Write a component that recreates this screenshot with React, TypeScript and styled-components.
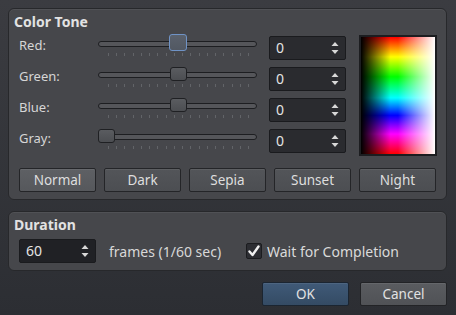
import React from "react";
import styled, { createGlobalStyle, css } from "styled-components";

const GlobalStyle = createGlobalStyle`
  html, body { margin: 0; padding: 0; }
  body {
    width: 456px;
    height: 315px;
    overflow: hidden;
    background: linear-gradient(#3b3c41, #2c2e33);
    font-family: "Noto Sans", "Open Sans", sans-serif;
    color: #dcdcdc;
  }
`;

const Dialog = styled.div`
  box-sizing: border-box;
  width: 456px;
  height: 315px;
  padding: 8px 9px 0 8px;
  display: flex;
  flex-direction: column;
`;

const Panel = styled.div<{ $h: number }>`
  box-sizing: border-box;
  height: ${(p) => p.$h}px;
  background: #46474b;
  border: 1px solid #27282b;
  border-radius: 6px;
  box-shadow: inset 0 1px 0 rgba(255, 255, 255, 0.06);
  padding: 0 9px 0 10px;
  display: flex;
  flex-direction: column;
`;

const Title = styled.div`
  font-weight: 700;
  font-size: 14px;
  line-height: 18px;
  height: 26px;
  padding-top: 4px;
  box-sizing: border-box;
  margin-left: -5px;
  color: #e2e2e2;
`;

const ToneArea = styled.div`
  display: flex;
  gap: 13px;
  align-items: flex-start;
`;

const Rows = styled.div`
  display: flex;
  flex-direction: column;
  gap: 7px;
  padding-top: 1px;
`;

const Row = styled.div`
  display: flex;
  align-items: flex-start;
  height: 24px;
`;

const Label = styled.div`
  width: 79px;
  font-size: 13px;
  line-height: 24px;
  height: 24px;
  margin-top: -3px;
  color: #d6d6d6;
`;

const Slider = styled.div`
  width: 159px;
  height: 24px;
  display: flex;
  flex-direction: column;
`;

const TrackArea = styled.div`
  position: relative;
  height: 16px;
`;

const Groove = styled.div`
  position: absolute;
  left: 0;
  right: 0;
  top: 5px;
  height: 4px;
  border: 1px solid #1d1e21;
  border-radius: 3px;
  background: #55565a;
`;

const Thumb = styled.div<{ $focus?: boolean }>`
  position: absolute;
  top: 0;
  width: 17px;
  height: 14px;
  box-sizing: border-box;
  border: 1px solid #1f2023;
  border-radius: 3px;
  background: linear-gradient(#5a5c60, #4c4e52);
  ${(p) =>
    p.$focus &&
    css`
      top: -2px;
      height: 17px;
      width: 18px;
      border: 1px solid #6f93c6;
      background: linear-gradient(#5a616c, #525862);
    `}
`;

const Ticks = styled.div`
  display: flex;
  justify-content: space-between;
  padding: 1px 8px 0 10px;
`;

const Tick = styled.span`
  width: 1px;
  height: 3px;
  background: #626468;
`;

const Spin = styled.div<{ $dark?: boolean }>`
  box-sizing: border-box;
  width: 77px;
  height: 24px;
  margin-left: 12px;
  background: ${(p) => (p.$dark ? "#202125" : "#2a2b2f")};
  border: 1px solid #1a1b1e;
  border-radius: 2px;
  display: flex;
  align-items: center;
  justify-content: space-between;
  padding: 0 6px 0 6px;
  font-size: 14px;
  color: #e4e4e4;
`;

const SpinValue = styled.span`
  line-height: 22px;
`;

const Arrows = () => (
  <svg width="8" height="16" viewBox="0 0 8 16">
    <path d="M4 2 L7.5 6 L0.5 6 Z" fill="#d8d8d8" />
    <path d="M4 14 L7.5 10 L0.5 10 Z" fill="#d8d8d8" />
  </svg>
);

const Picker = styled.div`
  box-sizing: border-box;
  width: 78px;
  height: 121px;
  border: 2px solid #1c1d20;
  background:
    linear-gradient(to right, #000 0%, rgba(0, 0, 0, 0) 40%, rgba(255, 255, 255, 0) 50%, #fff 100%),
    linear-gradient(to bottom, #f00 0%, #ff0 17%, #0f0 34%, #0ff 52%, #00f 67%, #f0f 83%, #f00 100%);
`;

const PresetRow = styled.div`
  display: flex;
  gap: 8px;
  margin-top: 12px;
`;

const PresetButton = styled.div<{ $active?: boolean }>`
  box-sizing: border-box;
  width: 77px;
  height: 24px;
  border: 1px solid #242528;
  border-radius: 2px;
  background: ${(p) =>
    p.$active ? "linear-gradient(#5e6064, #56585c)" : "linear-gradient(#535559, #4c4e52)"};
  box-shadow: inset 0 1px 0 rgba(255, 255, 255, 0.06);
  font-size: 13.5px;
  line-height: 22px;
  text-align: center;
  color: #dedede;
`;

const Gap = styled.div<{ $h: number }>`
  height: ${(p) => p.$h}px;
  flex: none;
`;

const DurationRow = styled.div`
  display: flex;
  align-items: center;
  height: 24px;
  margin-top: 1px;
`;

const FramesLabel = styled.span`
  width: 137px;
  margin-left: 13px;
  font-size: 14px;
  color: #d8d8d8;
`;

const CheckBox = styled.span`
  box-sizing: border-box;
  width: 16px;
  height: 16px;
  border: 1px solid #1b1c1f;
  border-radius: 2px;
  background: #2c2d32;
  display: flex;
  align-items: center;
  justify-content: center;
`;

const CheckLabel = styled.span`
  margin-left: 5px;
  font-size: 14px;
  color: #dadada;
`;

const Footer = styled.div`
  display: flex;
  justify-content: flex-end;
  gap: 11px;
`;

const DialogButton = styled.div<{ $primary?: boolean }>`
  box-sizing: border-box;
  width: 87px;
  height: 24px;
  border-radius: 2px;
  border: 1px solid ${(p) => (p.$primary ? "#1b2531" : "#222326")};
  background: ${(p) =>
    p.$primary ? "linear-gradient(#405a78, #344b64)" : "linear-gradient(#5a5c60, #505256)"};
  box-shadow: inset 0 1px 0 rgba(255, 255, 255, 0.07);
  font-size: 13.5px;
  line-height: 22px;
  text-align: center;
  color: #e2e2e2;
`;

const TICKS = Array.from({ length: 18 });

type Channel = { name: string; left: number; focus?: boolean };
const channels: Channel[] = [
  { name: "Red:", left: 71, focus: true },
  { name: "Green:", left: 72 },
  { name: "Blue:", left: 72 },
  { name: "Gray:", left: 0 },
];

const presets = ["Normal", "Dark", "Sepia", "Sunset", "Night"];

export default function App() {
  return (
    <>
      <GlobalStyle />
      <Dialog>
        <Panel $h={192}>
          <Title>Color Tone</Title>
          <ToneArea>
            <Rows>
              {channels.map((c) => (
                <Row key={c.name}>
                  <Label>{c.name}</Label>
                  <Slider>
                    <TrackArea>
                      <Groove />
                      <Thumb $focus={c.focus} style={{ left: c.left }} />
                    </TrackArea>
                    <Ticks>
                      {TICKS.map((_, i) => (
                        <Tick key={i} />
                      ))}
                    </Ticks>
                  </Slider>
                  <Spin>
                    <SpinValue>0</SpinValue>
                    <Arrows />
                  </Spin>
                </Row>
              ))}
            </Rows>
            <Picker />
          </ToneArea>
          <PresetRow>
            {presets.map((p, i) => (
              <PresetButton key={p} $active={i === 0}>
                {p}
              </PresetButton>
            ))}
          </PresetRow>
        </Panel>
        <Gap $h={11} />
        <Panel $h={60}>
          <Title>Duration</Title>
          <DurationRow>
            <Spin $dark style={{ marginLeft: 0 }}>
              <SpinValue>60</SpinValue>
              <Arrows />
            </Spin>
            <FramesLabel>frames (1/60 sec)</FramesLabel>
            <CheckBox>
              <svg width="12" height="12" viewBox="0 0 12 12">
                <path d="M1.5 6.5 L4.5 10 L10.5 1.5" stroke="#f0f0f0" strokeWidth="2.4" fill="none" strokeLinecap="round" strokeLinejoin="round" />
              </svg>
            </CheckBox>
            <CheckLabel>Wait for Completion</CheckLabel>
          </DurationRow>
        </Panel>
        <Gap $h={11} />
        <Footer>
          <DialogButton $primary>OK</DialogButton>
          <DialogButton>Cancel</DialogButton>
        </Footer>
      </Dialog>
    </>
  );
}
